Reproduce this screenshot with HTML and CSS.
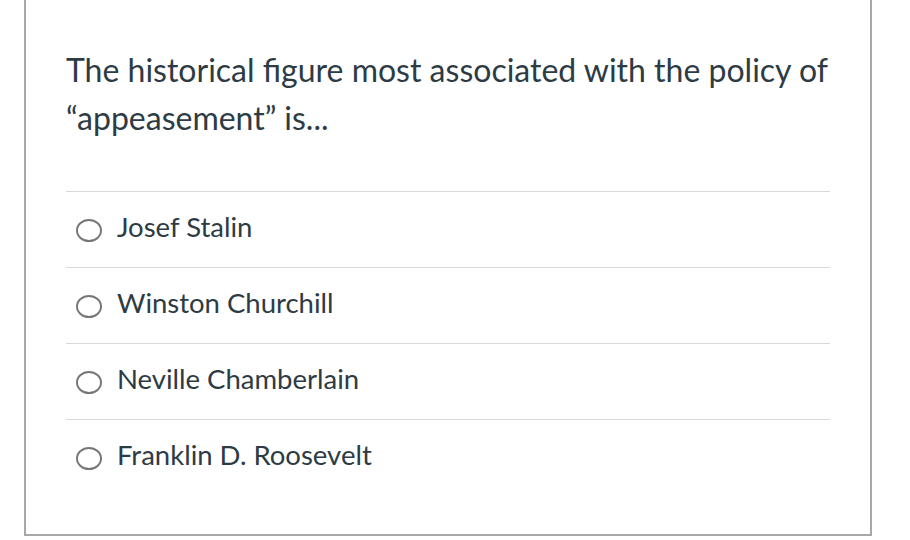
FILE: index.html
```html
<!DOCTYPE html>
<html>
<head>
<meta charset="utf-8">
<link rel="stylesheet" href="styles.css">
</head>
<body>
<div class="card">
  <p class="question">The historical figure most associated with the policy of “appeasement” is...</p>
  <ul class="answers">
    <li class="answer"><span class="radio"></span><span class="label">Josef Stalin</span></li>
    <li class="answer"><span class="radio"></span><span class="label">Winston Churchill</span></li>
    <li class="answer"><span class="radio"></span><span class="label">Neville Chamberlain</span></li>
    <li class="answer"><span class="radio"></span><span class="label">Franklin D. Roosevelt</span></li>
  </ul>
</div>
</body>
</html>
```
FILE: styles.css
```css
html, body {
  margin: 0;
  padding: 0;
  background: #fff;
}
body {
  font-family: Lato, "Open Sans", sans-serif;
  color: #2d3b45;
}
.card {
  margin-left: 24px;
  width: 848px;
  height: 536px;
  border: 2px solid #a8a8a8;
  border-top: none;
  padding: 46px 40px 0 40px;
  box-sizing: border-box;
}
.question {
  margin: 0;
  font-size: 32px;
  line-height: 48px;
}
.answers {
  list-style: none;
  margin: 49px 0 0 0;
  padding: 0;
  width: 764px;
}
.answer {
  display: flex;
  align-items: center;
  height: 75px;
  border-top: 1px solid #d9d9d9;
}
.radio {
  width: 26px;
  height: 23px;
  border: 2px solid #777;
  border-radius: 50%;
  margin-left: 10px;
  margin-right: 15px;
  margin-top: 2px;
  box-sizing: border-box;
  flex: none;
}
.label {
  font-size: 27.5px;
  padding-bottom: 6px;
}
```
